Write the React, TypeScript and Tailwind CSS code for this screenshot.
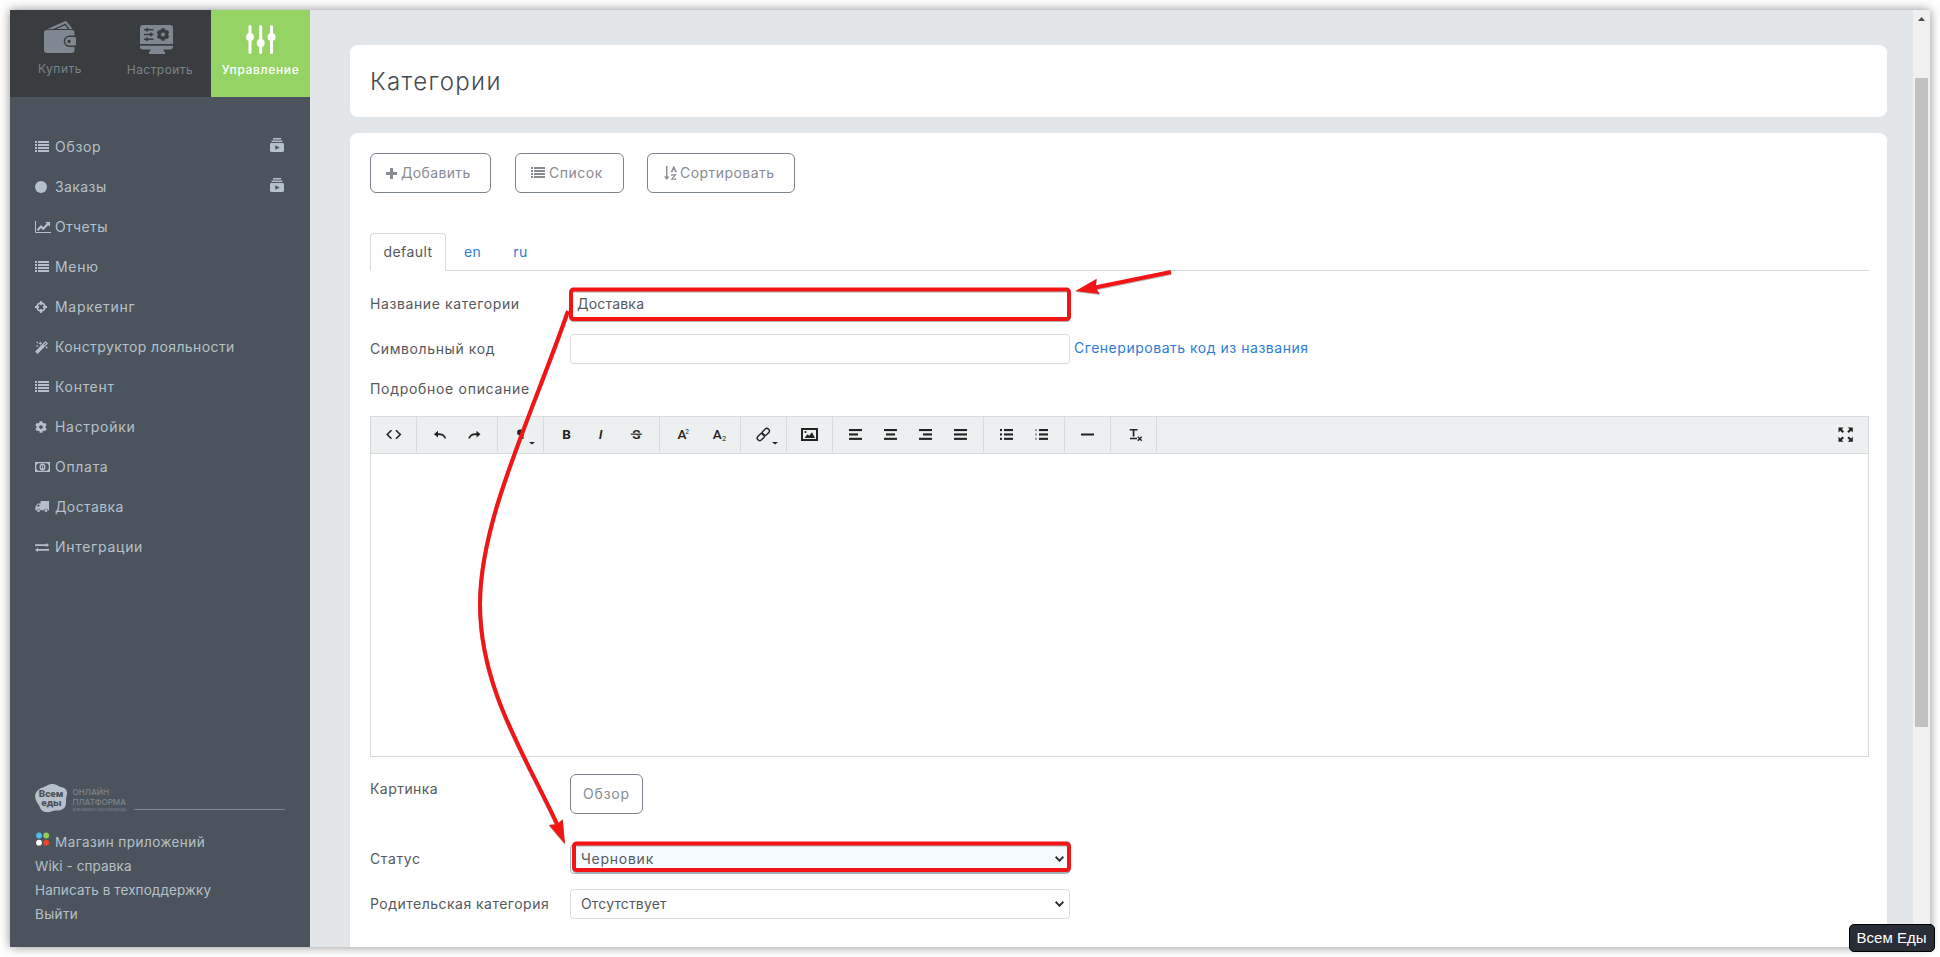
import React from 'react';
import { FaCog } from 'react-icons/fa';

const ListIcon = () => (
    <svg width="14" height="12" viewBox="0 0 14 12" fill="currentColor" shapeRendering="crispEdges">
        {[0, 3, 6, 9].map((y) => (
            <React.Fragment key={y}>
                <rect x="0" y={y} width="2" height="2" />
                <rect x="3" y={y} width="11" height="2" />
            </React.Fragment>
        ))}
    </svg>
);

const DotIcon = () => (
    <svg width="12" height="12" viewBox="0 0 12 12" fill="currentColor">
        <circle cx="6" cy="6" r="6" />
    </svg>
);

const ChartIcon = () => (
    <svg width="16" height="12" viewBox="0 0 16 12" fill="none" stroke="currentColor">
        <path d="M.5 0v11.5H16" />
        <path d="M2.500 9.200 6 5.600l2.200 2.100 4.600-4.800" strokeWidth="2.100" />
        <path d="M10.300 1H15v4.700z" fill="currentColor" stroke="none" />
    </svg>
);

const CrosshairIcon = () => (
    <svg width="12" height="12" viewBox="0 0 12 12" fill="none" stroke="currentColor" strokeWidth="1.800">
        <circle cx="6" cy="6" r="3.900" />
        <path d="M6 0v4M6 8v4M0 6h4M8 6h4" />
    </svg>
);

const MagicIcon = () => (
    <svg width="13" height="13" viewBox="0 0 13 13" fill="currentColor">
        <path d="M10.500.100 12.900 2.500 2.500 12.900.100 10.500zM8.500 3.900 9.100 4.500 11.300 2.500 10.500 1.700z" fillRule="evenodd" />
        <path d="M2.200 0l.4 1 .9.300-.9.400-.4.900-.4-.9-.9-.4.900-.3zM5.300.300l.6 1.500 1.500.6-1.500.6-.6 1.500-.6-1.500-1.500-.6 1.500-.6zM2.200 3.700l.4.900.9.400-.9.400-.4.900-.4-.9-.9-.4.900-.4zM11.700 5.200l.4.900.9.400-.9.400-.4.900-.4-.9-.9-.4.900-.4z" />
    </svg>
);

const MoneyIcon = () => (
    <svg width="15" height="10" viewBox="0 0 15 10" fill="none" stroke="currentColor">
        <rect x=".6" y=".6" width="13.800" height="8.800" strokeWidth="1.300" />
        <path d="M0 0h4.200L0 4.200zM15 0h-4.200L15 4.200zM0 10h4.200L0 5.800zM15 10h-4.200L15 5.800z" fill="currentColor" stroke="none" />
        <ellipse cx="7.500" cy="5" rx="2.300" ry="2.800" strokeWidth="1.400" />
        <path d="M7.500 3.400v3.200M6.600 6.500h1.800" strokeWidth=".9" />
    </svg>
);

const TruckIcon = () => (
    <svg width="14" height="12" viewBox="0 0 14 12" fill="currentColor">
        <path d="M5.600 0H14v9.200h-1.100a1.900 1.900 0 0 0-3.700 0H5.400a1.900 1.900 0 0 0-3.700 0H0V8.600h.5V5.400L2.800 2.500h2.800zM1.600 5.600h2.900V3.600H3.200z" fillRule="evenodd" />
        <circle cx="3.500" cy="9.700" r="1.400" />
        <circle cx="11" cy="9.700" r="1.400" />
    </svg>
);

const ExchangeIcon = () => (
    <svg width="14" height="9" viewBox="0 0 14 9" fill="currentColor">
        <path d="M0 1.200h11.200V0l2.800 2.100-2.800 2.100V3H0zM14 7.800H2.800V9L0 6.900l2.800-2.100V6H14z" />
    </svg>
);

const PlusIcon = () => (
    <svg width="11" height="11" viewBox="0 0 11 11" fill="currentColor">
        <path d="M4 0h3v4h4v3H7v4H4V7H0V4h4z" />
    </svg>
);

const SortIcon = () => (
    <svg width="13" height="14" viewBox="0 0 13 14" fill="none" stroke="currentColor">
        <path d="M2.700 0v12" strokeWidth="1.500" />
        <path d="M0 10.500h5.400L2.700 14z" fill="currentColor" stroke="none" />
        <path d="M7.700 5.300 9.800.7l2.100 4.600M8.600 3.900h2.500M6.800 5.600h2M10.800 5.600h2M7.800 10V8.900h3.700L7.700 13.300h4V12" strokeWidth="1.100" />
    </svg>
);

const VideoIcon = () => (
    <svg width="14" height="14" viewBox="0 0 14 14" fill="currentColor">
        <path d="M3 0h8v1.600H3zM1.600 2.600h10.800v1.300H1.600z" />
        <path d="M1.400 5h11.200c.8 0 1.400.6 1.400 1.400v6.200c0 .8-.6 1.400-1.400 1.400H1.400C.6 14 0 13.400 0 12.600V6.400C0 5.600.6 5 1.400 5zM5.300 7.200v4.500L9.600 9.500z" fillRule="evenodd" />
    </svg>
);

const WalletIcon = () => (
    <svg width="32" height="32" viewBox="0 0 32 32" fill="#7f8890">
        <path d="M3 9h24.500a3 3 0 0 1 3 3v2.500h-5a5.800 5.800 0 0 0 0 11.600h5V29a3 3 0 0 1-3 3H3a3 3 0 0 1-3-3V12a3 3 0 0 1 3-3z" />
        <path d="M25.300 16h5.200c1 0 1.500.6 1.500 1.500v5.500c0 1-.6 1.500-1.500 1.500h-5.200a4.250 4.250 0 0 1 0-8.500z" />
        <circle cx="25" cy="20.400" r="1.600" fill="#393d40" />
        <path d="M3.500 8 21 .3c.8-.4 1.500-.1 2 .6L28.500 8h-3L21.600 2.500 9.500 8z" />
        <path d="M12.500 8 21.200 4.200 23.800 8z" />
    </svg>
);

const MonitorIcon = () => (
    <svg width="33" height="29" viewBox="0 0 33 29" fill="#7f8890">
        <path d="M3 0h27a3 3 0 0 1 3 3v16H0V3a3 3 0 0 1 3-3zM0 20.800h33v.7a3 3 0 0 1-3 3h-6.500c.2 1.800.6 2.300 1.600 2.600v1.900H8.900v-1.900c1-.3 1.400-.8 1.600-2.600H3a3 3 0 0 1-3-3z" />
        <g stroke="#393d40" strokeWidth="1.500" fill="none">
            <path d="M4 4.800h9.500M4 9.500h9.500M4 14.200h9.500" />
            <path d="M7 3v3.600M11 7.700v3.600M7 12.400V16" strokeWidth="2" />
            <circle cx="23" cy="9.500" r="3.700" strokeWidth="3.400" />
            <path d="M23 3.200v3M23 12.800v3M17.500 6.300l2.600 1.500M25.900 11.200l2.600 1.500M17.500 12.700l2.600-1.500M25.900 7.800l2.600-1.500" strokeWidth="3.200" />
        </g>
    </svg>
);

const SlidersIcon = () => (
    <svg width="30" height="29" viewBox="0 0 30 29" fill="#fff">
        <rect x="2.500" y="0" width="3" height="29" rx="1.500" />
        <rect x="13.200" y="0" width="3" height="29" rx="1.500" />
        <rect x="24" y="0" width="3" height="29" rx="1.500" />
        <circle cx="4" cy="12" r="4" />
        <circle cx="14.700" cy="18" r="4" />
        <circle cx="25.500" cy="12" r="4" />
    </svg>
);

const menu = [
    { label: 'Обзор', icon: <ListIcon />, video: true },
    { label: 'Заказы', icon: <DotIcon />, video: true, tight: true },
    { label: 'Отчеты', icon: <ChartIcon />, tight: true },
    { label: 'Меню', icon: <ListIcon /> },
    { label: 'Маркетинг', icon: <CrosshairIcon /> },
    { label: 'Конструктор лояльности', icon: <MagicIcon />, tight: true },
    { label: 'Контент', icon: <ListIcon /> },
    { label: 'Настройки', icon: <FaCog size={12} /> },
    { label: 'Оплата', icon: <MoneyIcon /> },
    { label: 'Доставка', icon: <TruckIcon />, tight: true },
    { label: 'Интеграции', icon: <ExchangeIcon /> },
];

const Logo = () => (
    <svg width="99" height="30" viewBox="0 0 99 30">
        <path d="M8 3.500C11 2.500 13 0 17.500 0c4 0 5.500 2.500 8.500 3 4 .6 6.500 3.500 6 7-.3 2.500-1 3.500-1 6 0 4 .3 6.500-3 9-3.300 2.400-6.500 1-9.500 1.800-2.500.7-4.500 1.700-8 1.200C6.500 27.400 5.500 24.500 4 21.500 2.700 18.800.8 17.500.2 13.500-.4 9 2.500 5 8 3.500z" fill="#b5c0cb" />
        <g fill="#4b545c" fontFamily="Roboto, sans-serif" fontWeight="900">
            <text x="3.800" y="12.500" fontSize="9.500" textLength="24.500" lengthAdjust="spacingAndGlyphs">Всем</text>
            <text x="6.200" y="22.300" fontSize="9.500" textLength="20.500" lengthAdjust="spacingAndGlyphs">еды</text>
        </g>
        <g fill="#7b848c" fontFamily="Inter, sans-serif" fontWeight="500">
            <text x="37.500" y="10.800" fontSize="7.800" textLength="36.500" lengthAdjust="spacingAndGlyphs">ОНЛАЙН</text>
            <text x="37.500" y="21.300" fontSize="7.800" textLength="53.500" lengthAdjust="spacingAndGlyphs">ПЛАТФОРМА</text>
            <text x="37.500" y="26.900" fontSize="3.200" textLength="53.500" lengthAdjust="spacingAndGlyphs">ДЛЯ БИЗНЕСА ДОСТАВКИ ЕДЫ</text>
        </g>
    </svg>
);

const Sidebar = () => (
    <aside className="flex w-[300px] shrink-0 flex-col bg-[#4b545c] text-[#b5c0cb]">
        <nav className="flex h-[87px] shrink-0 bg-[#393d40] text-[12px] leading-4 text-[#7b848b]">
            <div className="flex w-[98px] flex-col items-center pt-[11px] pl-[2px]">
                <WalletIcon />
                <span className="mt-2 tracking-[0.5px]">Купить</span>
            </div>
            <div className="flex w-[103px] flex-col items-center pt-[15px]">
                <div className="mr-[6px]"><MonitorIcon /></div>
                <span className="mt-2 ml-px tracking-[0.45px]">Настроить</span>
            </div>
            <div className="flex w-[99px] flex-col items-center bg-[#94d364] pt-[15px] text-white">
                <SlidersIcon />
                <span className="mt-2 font-medium tracking-[0.65px]">Управление</span>
            </div>
        </nav>
        <ul className="mt-[30px] pr-[26px] pl-[25px]">
            {menu.map((item) => (
                <li key={item.label} className="flex h-10 items-center">
                    <span className="w-5">{item.icon}</span>
                    <span className={`flex-1 ${item.tight ? 'tracking-[0.4px]' : 'tracking-[0.7px]'}`}>{item.label}</span>
                    {item.video && <span className="mb-1"><VideoIcon /></span>}
                </li>
            ))}
        </ul>
        <div className="mt-auto mb-[21px] px-[25px]">
            <div className="flex items-end">
                <Logo />
                <div className="mb-1 h-px flex-1 bg-[#7d868d]" />
            </div>
            <ul className="mt-4 text-[13.5px] leading-6 tracking-[0.1px]">
                <li className="flex items-center tracking-[0.46px]">
                    <svg className="mb-[6px]" width="20" height="14" viewBox="0 0 20 14">
                        <circle cx="4" cy="3.500" r="2.900" fill="#4bbfe8" />
                        <circle cx="11.200" cy="3.500" r="2.900" fill="#8ccf5c" />
                        <circle cx="4" cy="10.700" r="2.900" fill="#fff" />
                        <circle cx="11.200" cy="10.700" r="2.900" fill="#ee4723" />
                    </svg>
                    Магазин приложений
                </li>
                <li>Wiki - справка</li>
                <li>Написать в техподдержку</li>
                <li className="tracking-[0.4px]">Выйти</li>
            </ul>
        </div>
    </aside>
);

const bars = (lines: [number, number][]) =>
    lines.map(([x, w], i) => <rect key={i} x={x} y={12 + i * 4.4} width={w} height="2.100" />);

const Caret = () => <path d="M26 25h6l-3 2.500z" />;

const toolbar: React.ReactNode[][] = [
    [<path d="M15.500 13.200 11.200 17.500l4.300 4.300M20 13.200l4.300 4.300-4.300 4.300" fill="none" stroke="currentColor" strokeWidth="1.600" />],
    [
        <path d="M12 17.200 16 13.800v2.500c4 0 7 1.200 8.200 5.200h-1.700c-1-2.500-3-3.400-6.500-3.400v2.500z" />,
        <path d="M23.500 17.200 19.500 13.800v2.500c-4 0-7 1.200-8.200 5.200h1.700c1-2.500 3-3.400 6.500-3.400v2.500z" />,
    ],
    [
        <>
            <path d="M20.500 12.500H17a2.900 2.900 0 0 0 0 5.800V22h1.300v-8.200h1V22h1.200z" />
            <Caret />
        </>,
    ],
    [
        <text x="13.200" y="22.300" fontSize="13.500" fontWeight="700">B</text>,
        <text x="14.700" y="22.300" fontSize="13.500" fontWeight="600" fontStyle="italic">I</text>,
        <>
            <text x="13.200" y="22.300" fontSize="13.500" fontWeight="600">S</text>
            <rect x="11.500" y="16" width="12" height="2.400" fill="#ecf0f1" />
            <rect x="11.800" y="16.600" width="11.200" height="1.200" />
        </>,
    ],
    [
        <>
            <text x="12.600" y="22.300" fontSize="13.500" fontWeight="500">A</text>
            <text x="20.300" y="17" fontSize="6.500">2</text>
        </>,
        <>
            <text x="12.800" y="22.300" fontSize="13.500" fontWeight="500">A</text>
            <text x="21.900" y="24.300" fontSize="7.500">2</text>
        </>,
    ],
    [
        <>
            <g transform="rotate(-45 17.300 17.500)" fill="none" stroke="currentColor" strokeWidth="1.400">
                <rect x="9.800" y="15" width="8" height="5" rx="2.500" />
                <rect x="16.800" y="15" width="8" height="5" rx="2.500" />
            </g>
            <Caret />
        </>,
    ],
    [
        <>
            <path d="M9 11h17v13H9zM11 13v9h13v-9z" fillRule="evenodd" />
            <path d="M12.500 21l3-3.800 1.800 1.600 2.700-3.600 3 5.800z" />
            <circle cx="13.500" cy="15" r="1.100" />
        </>,
    ],
    [
        bars([[11, 13], [11, 9], [11, 13]]),
        bars([[11, 13], [13, 9], [11, 13]]),
        bars([[11, 13], [15, 9], [11, 13]]),
        bars([[11, 13], [11, 13], [11, 13]]),
    ],
    [
        <>{bars([[11, 2], [11, 2], [11, 2]])}{bars([[15, 9], [15, 9], [15, 9]])}</>,
        <><g opacity=".4">{bars([[11, 2], [11, 2], [11, 2]])}</g>{bars([[15, 9], [15, 9], [15, 9]])}</>,
    ],
    [<rect x="11" y="16.500" width="13" height="2" />],
    [
        <>
            <path d="M13.700 12h7.800v1.500h-3.100v6h-1.700v-6h-3zM14 20.800h7v1.500h-7z" />
            <path d="m21.800 19.800 3.900 3.900m0-3.900-3.900 3.900" stroke="currentColor" strokeWidth="1.400" />
        </>,
    ],
];

const ToolButton = ({ children }: { children: React.ReactNode }) => (
    <svg width="35" height="35" viewBox="0 0 35 35" fill="currentColor" fontFamily="Roboto, sans-serif">
        {children}
    </svg>
);

const Editor = () => (
    <div className="h-[341px] border border-[#d8dbdc]">
        <div className="flex h-[37px] border-b border-[#d5dddf] bg-[#ecf0f1] text-[#222]">
            {toolbar.map((group, i) => (
                <div key={i} className="flex h-[35px] border-r border-[#d3dddf] px-[5px]">
                    {group.map((icon, j) => (
                        <ToolButton key={j}>{icon}</ToolButton>
                    ))}
                </div>
            ))}
            <div className="mr-[5px] ml-auto">
                <ToolButton>
                    <path d="M10.500 10.500h5l-1.700 1.700 2.200 2.200-1.500 1.500-2.200-2.200-1.800 1.800zM24.800 10.500h-5l1.700 1.700-2.200 2.200 1.500 1.500 2.200-2.200 1.800 1.800zM10.500 24.800h5l-1.700-1.700 2.200-2.200-1.500-1.500-2.200 2.200-1.800-1.800zM24.800 24.800h-5l1.700-1.700-2.200-2.200 1.500-1.500 2.200 2.200 1.800-1.800z" />
                </ToolButton>
            </div>
        </div>
    </div>
);

const Field = ({ label, children }: { label: string; children: React.ReactNode }) => (
    <div className="mb-[15px] flex h-[30px] items-center">
        <span className={`w-[200px] shrink-0 ${label.length > 18 ? 'tracking-[0.48px]' : 'tracking-[0.6px]'}`}>{label}</span>
        {children}
    </div>
);

const Select = ({ value, active }: { value: string; active?: boolean }) => (
    <div
        className={`flex h-[30px] w-[500px] items-center justify-between rounded border pr-[5px] pl-[10px] ${
            active ? 'border-[#9fb9cb] bg-[#f5fafe] tracking-[0.75px]' : 'border-[#d8dbdd] tracking-[0.15px]'
        }`}
    >
        {value}
        <svg width="9" height="6" viewBox="0 0 9 6" fill="none" stroke="#333" strokeWidth="2">
            <path d="m.6.800 3.900 3.900L8.400.800" />
        </svg>
    </div>
);

const buttonClass = 'flex h-10 items-center rounded-md border border-[#7b848c] text-[#888b90]';

const Annotations = () => (
    <svg className="pointer-events-none absolute top-0 left-0" width="1940" height="957" viewBox="0 0 1940 957" fill="none" stroke="#f31515" strokeWidth="4">
        <g className="[filter:drop-shadow(0_1px_0.5px_rgba(0,0,0,0.3))]">
            <rect x="571" y="289.500" width="498" height="29.500" rx="2.500" />
            <rect x="574" y="843.500" width="495" height="26.500" rx="2.500" />
            <path d="M1171 272 1095 287.500" />
            <path d="M1075.300 291 1096.700 278.700 1095.700 287.300 1099.700 294z" fill="#f31515" stroke="none" />
            <path d="M568 311C530 420 480 520 480 604S525 755 557 824" />
            <path d="M565 844 549 825 557 824 562.700 819.300z" fill="#f31515" stroke="none" />
        </g>
    </svg>
);

export default function App() {
    return (
        <div className="relative h-[957px] w-[1940px] overflow-hidden bg-white p-[10px] font-['Inter',sans-serif] text-[14px] leading-5">
            <div className="flex h-[937px] w-[1920px] shadow-[0_0_10px_rgba(0,0,0,0.45)]">
                <Sidebar />
                <main className="flex flex-1 flex-col overflow-hidden bg-[#e2e6e9] pt-[35px] pr-[26px] pl-10 tracking-[0.45px] text-[#55585c]">
                    <header className="flex h-[72px] shrink-0 items-center rounded-lg bg-white px-5">
                        <h1 className="mt-[2px] text-[24px] font-light tracking-[1.35px] text-[#454a4f]">Категории</h1>
                    </header>
                    <section className="mt-4 flex-1 rounded-t-lg bg-white pt-5 pr-[18px] pl-5">
                        <div className="flex">
                            <button className={`${buttonClass} w-[121px] gap-1 pl-[15px] tracking-[0.35px]`}>
                                <PlusIcon />Добавить
                            </button>
                            <button className={`${buttonClass} ml-6 w-[109px] gap-1 pl-[15px] tracking-[0.5px]`}>
                                <ListIcon />Список
                            </button>
                            <button className={`${buttonClass} ml-[23px] w-[148px] gap-[3px] pl-4 tracking-[0.45px]`}>
                                <SortIcon />Сортировать
                            </button>
                        </div>
                        <div className="mt-10 flex h-[38px] border-b border-[#d8dbdd]">
                            <div className="-mb-px flex w-[76px] items-center justify-center rounded-t border border-[#d8dbdd] border-b-white bg-white">default</div>
                            <div className="flex items-center pl-[18px] text-[#2e7bd8]">en</div>
                            <div className="flex items-center pl-8 text-[#2e7bd8]">ru</div>
                        </div>
                        <div className="mt-[18px]">
                            <Field label="Название категории">
                                <div className="flex h-[30px] w-[500px] items-center rounded border border-[#d8dbdd] px-[6px] tracking-[0.2px]">Доставка</div>
                            </Field>
                            <Field label="Символьный код">
                                <div className="h-[30px] w-[500px] rounded border border-[#d8dbdd]" />
                                <a className="mb-[2px] ml-1 tracking-[0.52px] text-[#2e7bd8]">Сгенерировать код из названия</a>
                            </Field>
                        </div>
                        <div className="mb-[17px] tracking-[0.7px]">Подробное описание</div>
                        <Editor />
                        <div className="mt-[17px] mb-[30px] flex">
                            <span className="mt-[5px] w-[200px]">Картинка</span>
                            <button className={`${buttonClass} w-[73px] justify-center tracking-[0.8px]`}>Обзор</button>
                        </div>
                        <Field label="Статус"><Select value="Черновик" active /></Field>
                        <Field label="Родительская категория"><Select value="Отсутствует" /></Field>
                    </section>
                </main>
                <div className="flex w-[17px] shrink-0 flex-col items-center bg-[#f0f0f0]">
                    <svg className="mt-[7px]" width="7" height="4" viewBox="0 0 7 4" fill="#4c4c4c">
                        <path d="M0 4h7L3.500 0z" />
                    </svg>
                    <div className="mt-[57px] h-[649px] w-[13px] bg-[#c1c1c1]" />
                </div>
            </div>
            <Annotations />
            <div className="absolute right-[5px] bottom-[5px] flex h-[28px] w-[86px] items-center justify-center rounded-[5px] border border-black bg-[#292d38] pr-px font-['Liberation_Sans',sans-serif] text-[15px] text-white">
                Всем Еды
            </div>
        </div>
    );
}
